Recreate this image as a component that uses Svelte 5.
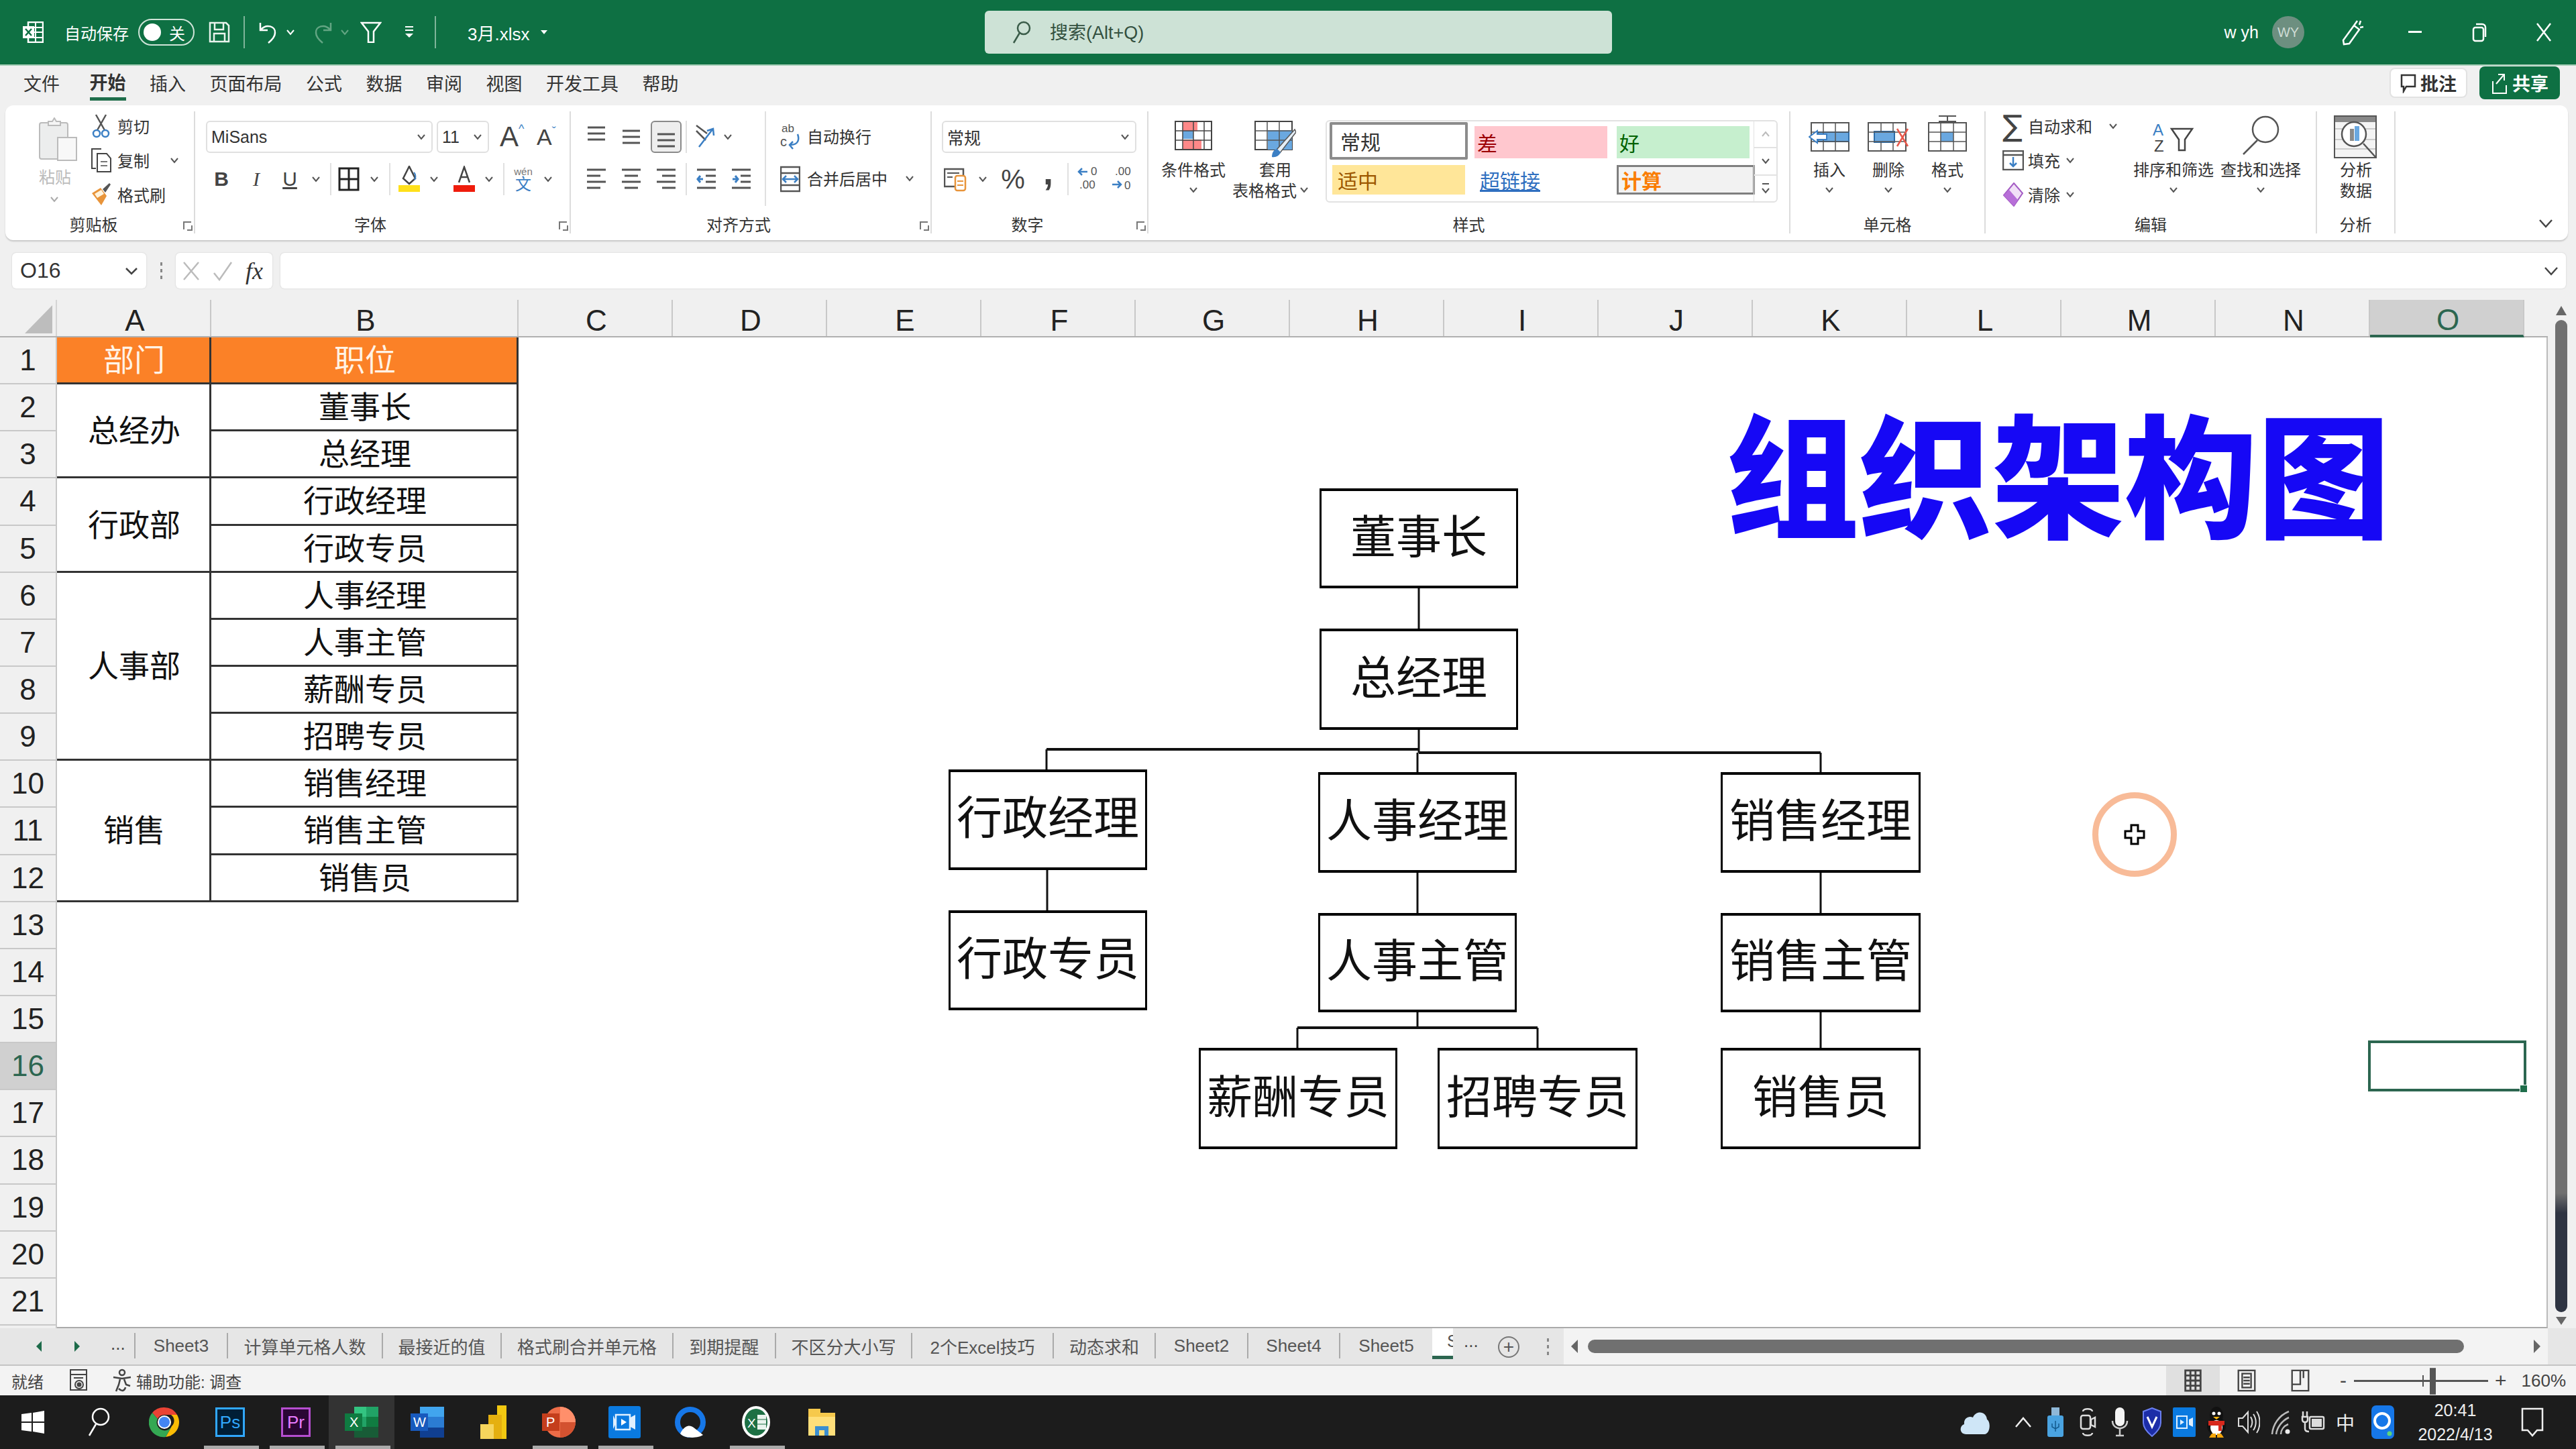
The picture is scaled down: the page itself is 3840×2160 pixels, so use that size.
<script>
  const tabs = ['插入', '页面布局', '公式', '数据', '审阅', '视图', '开发工具', '帮助'];

  const columns = 'CDEFGHIJKLMN'.split('');
  const rows = Array.from({ length: 21 }, (_, i) => i + 1);

  const departments = [
    { name: '总经办', jobs: ['董事长', '总经理'] },
    { name: '行政部', jobs: ['行政经理', '行政专员'] },
    { name: '人事部', jobs: ['人事经理', '人事主管', '薪酬专员', '招聘专员'] },
    { name: '销售', jobs: ['销售经理', '销售主管', '销售员'] },
  ];

  // canvas offset: the sheet cells start at 85,503 on the screen
  const ox = 85;
  const oy = 503;

  const nodes = [
    { text: '董事长', x: 1967, y: 728, w: 296, h: 149 },
    { text: '总经理', x: 1967, y: 937, w: 296, h: 151 },
    { text: '行政经理', x: 1414, y: 1147, w: 296, h: 150 },
    { text: '人事经理', x: 1965, y: 1151, w: 296, h: 150 },
    { text: '销售经理', x: 2565, y: 1151, w: 298, h: 150 },
    { text: '行政专员', x: 1414, y: 1357, w: 296, h: 149 },
    { text: '人事主管', x: 1965, y: 1361, w: 296, h: 148 },
    { text: '销售主管', x: 2565, y: 1361, w: 298, h: 148 },
    { text: '薪酬专员', x: 1787, y: 1562, w: 296, h: 151 },
    { text: '招聘专员', x: 2143, y: 1562, w: 298, h: 151 },
    { text: '销售员', x: 2565, y: 1562, w: 298, h: 151 },
  ];

  const links = [
    [2115, 877, 2115, 937],
    [2115, 1088, 2115, 1122],
    [1560, 1117, 2115, 1117],
    [2115, 1122, 2714, 1122],
    [1560, 1117, 1560, 1147],
    [2113, 1122, 2113, 1151],
    [2714, 1122, 2714, 1151],
    [1561, 1297, 1561, 1357],
    [2113, 1301, 2113, 1361],
    [2714, 1301, 2714, 1361],
    [2113, 1509, 2113, 1532],
    [1934, 1532, 2292, 1532],
    [1934, 1532, 1934, 1562],
    [2292, 1532, 2292, 1562],
    [2714, 1509, 2714, 1562],
  ];

  const sheets = [
    { name: 'Sheet3', w: 138 },
    { name: '计算单元格人数', w: 231 },
    { name: '最接近的值', w: 177 },
    { name: '格式刷合并单元格', w: 256 },
    { name: '到期提醒', w: 153 },
    { name: '不区分大小写', w: 203 },
    { name: '2个Excel技巧', w: 211 },
    { name: '动态求和', w: 152 },
    { name: 'Sheet2', w: 138 },
    { name: 'Sheet4', w: 137 },
    { name: 'Sheet5', w: 139 },
  ];
</script>

{#snippet chev(color = '#555')}
  <svg class="chev" width="14" height="10" viewBox="0 0 14 10"><path d="M2 2l5 6 5-6" fill="none" stroke={color} stroke-width="2" /></svg>
{/snippet}

{#snippet lines(kind)}
  <svg width="30" height="34" viewBox="0 0 30 34" fill="none" stroke="#555" stroke-width="3">
    {#if kind === 'top'}
      <path d="M2 3h26M2 12h26M2 21h26" />
    {:else if kind === 'mid'}
      <path d="M2 8h26M2 17h26M2 26h26" />
    {:else if kind === 'bot'}
      <path d="M2 13h26M2 22h26M2 31h26" />
    {:else if kind === 'left'}
      <path d="M1 3h28M1 12h20M1 21h28M1 30h20" />
    {:else if kind === 'center'}
      <path d="M1 3h28M5 12h20M1 21h28M5 30h20" />
    {:else if kind === 'right'}
      <path d="M1 3h28M9 12h20M1 21h28M9 30h20" />
    {:else if kind === 'out'}
      <path d="M1 3h28M14 12h15M14 21h15M1 30h28" /><path d="M10 17H2m4-5l-4 5 4 5" stroke="#3b7fc4" />
    {:else}
      <path d="M1 3h28M14 12h15M14 21h15M1 30h28" /><path d="M2 17h8m-4-5l4 5-4 5" stroke="#3b7fc4" />
    {/if}
  </svg>
{/snippet}

<div class="app">
  <header class="titlebar">
    <div class="tb-left">
      <svg class="tb-xl" width="32" height="32" viewBox="0 0 32 32"><rect x="9" y="1" width="22" height="30" fill="none" stroke="#fff" stroke-width="2.5" /><path d="M20 1v30M9 9h22M9 16h22M9 24h22" stroke="#fff" stroke-width="2" /><rect x="1" y="7" width="17" height="18" fill="#fff" /><path d="M5 11l9 10M14 11l-9 10" stroke="#0e7043" stroke-width="2.5" /></svg>
      <span class="autosave">自动保存</span>
      <span class="toggle"><i></i><b>关</b></span>
      <svg class="tb-save" width="32" height="32" viewBox="0 0 32 32" fill="none" stroke="#e8f3ec" stroke-width="2.5"><path d="M2 2h24l4 4v24H2zM9 2v10h13V2M8 30V18h16v12" /></svg>
      <i class="tb-sep first"></i>
      <svg class="tb-undo" width="30" height="34" viewBox="0 0 30 34" fill="none" stroke="#fff" stroke-width="2.5"><path d="M3 3v11h11M4 13C12 4 26 8 25 18c0 5-4 10-10 15" /></svg>
      <span class="tb-chev">{@render chev('#fff')}</span>
      <svg class="tb-redo" width="30" height="34" viewBox="0 0 30 34" fill="none" stroke="#63a583" stroke-width="2.5"><path d="M27 3v11H16M26 13C18 4 4 8 5 18c0 5 4 10 10 15" /></svg>
      <span class="tb-chev dim">{@render chev('#63a583')}</span>
      <svg class="tb-filter" width="32" height="32" viewBox="0 0 32 32" fill="none" stroke="#fff" stroke-width="2.5"><path d="M2 2h28L20 15v16h-8V15z" /></svg>
      <svg class="tb-more" width="14" height="20" viewBox="0 0 14 20"><path d="M1 2h12M1 7h12" stroke="#fff" stroke-width="2" /><path d="M1 12l6 6 6-6z" fill="#fff" /></svg>
      <i class="tb-sep second"></i>
      <span class="filename">3月.xlsx</span>
      <svg class="tb-drop" width="12" height="8" viewBox="0 0 12 8"><path d="M1 1h10L6 7z" fill="#fff" /></svg>
    </div>
    <div class="search">
      <svg width="30" height="36" viewBox="0 0 30 36" fill="none" stroke="#3a5c49" stroke-width="2.5"><circle cx="18" cy="12" r="9" /><path d="M12 19L3 34" /></svg>
      <span>搜索(Alt+Q)</span>
    </div>
    <div class="tb-right">
      <span class="user">w yh</span>
      <span class="avatar">WY</span>
      <svg class="pen" width="36" height="40" viewBox="0 0 36 40" fill="none" stroke="#fff" stroke-width="2.5"><path d="M4 32L20 10l8 6-15 21-8 1zM20 10l5-7M30 3l-2 6M34 12l-5 1" /></svg>
      <span class="winbtn"><svg width="20" height="4"><rect width="20" height="3" fill="#fff" /></svg></span>
      <span class="winbtn"><svg width="22" height="30" viewBox="0 0 22 30" fill="none" stroke="#fff" stroke-width="2.5"><rect x="2" y="8" width="15" height="20" rx="3" /><path d="M6 3h9c3 0 5 2 5 5v14" /></svg></span>
      <span class="winbtn"><svg width="24" height="30" viewBox="0 0 24 30" fill="none" stroke="#fff" stroke-width="2.5"><path d="M2 2l20 26M22 2L2 28" /></svg></span>
    </div>
  </header>

  <nav class="tabbar">
    <span class="tab">文件</span>
    <span class="tab active">开始</span>
    {#each tabs as tab}
      <span class="tab">{tab}</span>
    {/each}
    <div class="tab-actions">
      <span class="btn-note">
        <svg width="24" height="30" viewBox="0 0 24 30" fill="none" stroke="#333" stroke-width="2.5"><path d="M2 3h20v17H9l-4 7v-7H2z" /></svg>
        批注
      </span>
      <span class="btn-share">
        <svg width="26" height="34" viewBox="0 0 26 34" fill="none" stroke="#fff" stroke-width="2"><path d="M3 14v18h20V20M8 18L19 5M11 4h9v9" /></svg>
        共享
      </span>
    </div>
  </nav>

  <section class="ribbon">
    <div class="group clip">
      <div class="g-body">
        <div class="paste">
          <svg width="58" height="66" viewBox="0 0 58 66" fill="none"><rect x="1" y="8" width="42" height="54" rx="3" fill="#eceded" stroke="#bbb" stroke-width="2" /><path d="M14 12V6h6l3-5 3 5h6v6z" fill="#f5f5f5" stroke="#bbb" stroke-width="2" /><rect x="28" y="30" width="28" height="34" fill="#f8f8f8" stroke="#bbb" stroke-width="2" /></svg>
          <span>粘贴</span>
          {@render chev('#aaa')}
        </div>
        <div class="stack">
          <div class="st-row"><svg width="30" height="36" viewBox="0 0 30 36" fill="none" stroke-width="2.5"><path d="M7 1l13 23M22 1L9 24" stroke="#555" /><circle cx="8" cy="29" r="5" stroke="#3b7fc4" /><circle cx="21" cy="29" r="5" stroke="#3b7fc4" /></svg><span>剪切</span></div>
          <div class="st-row"><svg width="32" height="36" viewBox="0 0 32 36" fill="none" stroke="#444" stroke-width="2"><path d="M8 30H2V1h14" /><path d="M10 8h14l6 7v20H10z" /><path d="M15 20h10M15 26h10" stroke="#777" /></svg><span>复制</span><span class="copy-chev">{@render chev()}</span></div>
          <div class="st-row"><svg width="32" height="36" viewBox="0 0 32 36"><path d="M2 16l13-8 9 12-8 14z" fill="#e8943a" /><path d="M6 17l10-6 4 6-10 6z" fill="#fff3dc" /><path d="M18 10L28 1l2 2-8 12z" fill="#555" /></svg><span>格式刷</span></div>
        </div>
      </div>
      <div class="g-label">剪贴板</div>
      <span class="launcher"></span>
    </div>

    <div class="group font">
      <div class="g-body vert">
        <div class="row-1 font-r1">
          <span class="select fam"><span>MiSans</span>{@render chev()}</span>
          <span class="select size"><span>11</span>{@render chev()}</span>
          <span class="grow">A<sup>^</sup></span>
          <span class="shrink">A<sup>ˇ</sup></span>
        </div>
        <div class="row-2 font-r2">
          <span class="ib w52 bold">B</span>
          <span class="ib w52 ital">I</span>
          <span class="ib w48 under">U</span>
          <span class="ib w30">{@render chev()}</span>
          <span class="ib w14"><i class="vsep"></i></span>
          <span class="ib w40"><svg width="32" height="36" viewBox="0 0 32 36" fill="none" stroke="#222" stroke-width="3"><rect x="2" y="2" width="28" height="32" /><path d="M16 2v32M2 18h28" /></svg></span>
          <span class="ib w36">{@render chev()}</span>
          <span class="ib w10"><i class="vsep"></i></span>
          <span class="ib w48"><svg width="32" height="40" viewBox="0 0 32 40"><path d="M16 1l9 18-9 8-9-8z" fill="none" stroke="#444" stroke-width="2.5" /><path d="M23 10c3 3 3 8 1 11" fill="none" stroke="#3b7fc4" stroke-width="2" /><rect y="29" width="32" height="10" fill="#ffe01a" /></svg></span>
          <span class="ib w26">{@render chev()}</span>
          <span class="ib w64"><svg width="32" height="40" viewBox="0 0 32 40"><path d="M8 25L16 2l8 23M11 17h10" fill="none" stroke="#444" stroke-width="2.5" /><rect y="29" width="32" height="10" fill="#ef1c0c" /></svg></span>
          <span class="ib w10">{@render chev()}</span>
          <span class="ib w34"><i class="vsep"></i></span>
          <span class="ib w24 wen"><small>wén</small><em>文</em></span>
          <span class="ib w50">{@render chev()}</span>
        </div>
      </div>
      <div class="g-label">字体</div>
      <span class="launcher"></span>
    </div>

    <div class="group align">
      <div class="g-body">
        <div class="align-left">
          <div class="row-1">
            <span class="ib w52">{@render lines('top')}</span>
            <span class="ib w52">{@render lines('mid')}</span>
            <span class="ib w52 on"><span class="pressed">{@render lines('bot')}</span></span>
            <span class="ib w8"><i class="vsep"></i></span>
            <span class="ib w50"><svg width="36" height="42" viewBox="0 0 36 42" fill="none" stroke="#555" stroke-width="2.5"><path d="M4 4l16 12M4 12l14 14" /><path d="M8 36L28 10m-8 2l9-3 1 10" stroke="#3b7fc4" /></svg></span>
            <span class="ib w16">{@render chev()}</span>
          </div>
          <div class="row-2">
            <span class="ib w52">{@render lines('left')}</span>
            <span class="ib w52">{@render lines('center')}</span>
            <span class="ib w52">{@render lines('right')}</span>
            <span class="ib w8"><i class="vsep"></i></span>
            <span class="ib w52">{@render lines('out')}</span>
            <span class="ib w52">{@render lines('in')}</span>
          </div>
        </div>
        <div class="align-right">
          <div class="row-1 wrap-row">
            <svg width="30" height="44" viewBox="0 0 30 44" fill="none"><text x="2" y="15" font-size="17" fill="#555" font-family="Liberation Sans">ab</text><text x="0" y="36" font-size="20" fill="#555" font-family="Liberation Sans">c</text><path d="M26 18c3 8 1 16-11 16m4-5l-5 5 5 6" stroke="#3b7fc4" stroke-width="2.5" /></svg>
            <span>自动换行</span>
          </div>
          <div class="row-2 wrap-row">
            <svg width="30" height="40" viewBox="0 0 30 40" fill="none" stroke="#555" stroke-width="2.5"><rect x="1" y="2" width="28" height="36" /><path d="M1 11h28M1 29h28" /><path d="M4 20h22m-17-5l-5 5 5 5m12-10l5 5-5 5" stroke="#3b7fc4" /></svg>
            <span>合并后居中</span>
            <span class="merge-chev">{@render chev()}</span>
          </div>
        </div>
      </div>
      <div class="g-label">对齐方式</div>
      <span class="launcher"></span>
    </div>

    <div class="group number">
      <div class="g-body vert">
        <div class="row-1"><span class="select num"><span>常规</span>{@render chev()}</span></div>
        <div class="row-2 num-r2">
          <span class="ib w40"><svg width="34" height="38" viewBox="0 0 34 38" fill="none"><path d="M1 4h28v26H1z" stroke="#555" stroke-width="2.5" /><path d="M5 10h18M5 16h8" stroke="#555" stroke-width="2" /><rect x="17" y="14" width="15" height="22" rx="3" fill="#fff" stroke="#e8943a" stroke-width="2.5" /><path d="M20 22h9M20 28h9" stroke="#e8943a" stroke-width="2" /></svg></span>
          <span class="ib w42">{@render chev()}</span>
          <span class="ib w48 pct">%</span>
          <span class="ib w57 comma">,</span>
          <i class="vsep"></i>
          <span class="ib w59 dec"><svg width="34" height="40" viewBox="0 0 34 40" fill="none" stroke-width="2.5"><path d="M15 9H2m5-5l-5 5 5 5" stroke="#3b7fc4" /><text x="20" y="14" font-size="17" fill="#555" stroke="none" font-family="Liberation Sans">0</text><text x="3" y="34" font-size="17" fill="#555" stroke="none" font-family="Liberation Sans">.00</text></svg></span>
          <span class="ib w42 dec"><svg width="34" height="40" viewBox="0 0 34 40" fill="none" stroke-width="2.5"><text x="6" y="14" font-size="17" fill="#555" stroke="none" font-family="Liberation Sans">.00</text><path d="M2 28h13m-5-5l5 5-5 5" stroke="#3b7fc4" /><text x="20" y="35" font-size="17" fill="#555" stroke="none" font-family="Liberation Sans">0</text></svg></span>
        </div>
      </div>
      <div class="g-label">数字</div>
      <span class="launcher"></span>
    </div>

    <div class="group styles">
      <div class="g-body">
        <div class="big w110">
          <div class="big-icon">
            <svg width="56" height="44" viewBox="0 0 56 44"><rect x="1" y="1" width="54" height="42" fill="#fff" stroke="#444" stroke-width="2" /><rect x="12" y="2" width="22" height="13" fill="#f88" /><rect x="12" y="15" width="16" height="12" fill="#6aa8e0" /><rect x="12" y="28" width="28" height="14" fill="#f88" /><path d="M12 1v42M28 1v42M44 1v42M1 15h54M1 29h54" stroke="#444" stroke-width="1.5" /></svg>
          </div>
          <div class="big-text">条件格式</div>
          <div class="big-text">{@render chev()}</div>
        </div>
        <div class="big w134">
          <div class="big-icon">
            <svg width="62" height="56" viewBox="0 0 62 56"><rect x="1" y="1" width="55" height="42" fill="#fff" stroke="#444" stroke-width="2" /><rect x="20" y="14" width="36" height="29" fill="#6aa8e0" /><path d="M19 1v42M37 1v42M1 15h55M1 29h55" stroke="#555" stroke-width="1.5" /><path d="M60 13L34 42l-6 10 10-4 24-31z" fill="#e4eef7" stroke="#555" stroke-width="1.5" /><path d="M34 42c-5 1-8 5-8 12 6 1 11-2 13-7z" fill="#3b7fc4" /></svg>
          </div>
          <div class="big-text">套用</div>
          <div class="big-text shift">表格格式{@render chev()}</div>
        </div>
        <div class="gallery">
          <div class="gal-grid">
            <span class="st normal">常规</span>
            <span class="st bad">差</span>
            <span class="st good">好</span>
            <span class="st neutral">适中</span>
            <span class="st link">超链接</span>
            <span class="st calc">计算</span>
          </div>
          <div class="gal-arrows">
            <span><svg width="14" height="10" viewBox="0 0 14 10"><path d="M2 8l5-6 5 6" fill="none" stroke="#bbb" stroke-width="2" /></svg></span>
            <span>{@render chev()}</span>
            <span><svg width="14" height="18" viewBox="0 0 14 18"><path d="M2 2h10" stroke="#555" stroke-width="2" /><path d="M2 9l5 6 5-6" fill="none" stroke="#555" stroke-width="2" /></svg></span>
          </div>
        </div>
      </div>
      <div class="g-label">样式</div>
    </div>

    <div class="group cells">
      <div class="g-body">
        <div class="big w88">
          <div class="big-icon">
            <svg width="62" height="44" viewBox="0 0 62 44"><rect x="4" y="1" width="56" height="42" fill="#fff" stroke="#555" stroke-width="2" /><rect x="14" y="15" width="46" height="14" fill="#6aa8e0" stroke="#2d6ca8" stroke-width="2" /><path d="M22 1v42M40 1v42M4 15h56M4 29h56" stroke="#555" stroke-width="1.5" /><path d="M1 22l12-9v5h14v8H13v5z" fill="#fff" stroke="#3b7fc4" stroke-width="2" /></svg>
          </div>
          <div class="big-text">插入</div>
          <div class="big-text">{@render chev()}</div>
        </div>
        <div class="big w88">
          <div class="big-icon">
            <svg width="62" height="44" viewBox="0 0 62 44"><rect x="1" y="1" width="56" height="42" fill="#fff" stroke="#555" stroke-width="2" /><rect x="10" y="14" width="30" height="16" fill="#6aa8e0" stroke="#2d6ca8" stroke-width="2" /><path d="M20 1v13M38 1v13M20 30v13M38 30v13M1 15h56M1 29h56" stroke="#555" stroke-width="1.5" /><path d="M44 10l16 26M60 10L44 36" stroke="#e8584a" stroke-width="2.5" /></svg>
          </div>
          <div class="big-text">删除</div>
          <div class="big-text">{@render chev()}</div>
        </div>
        <div class="big w88">
          <div class="big-icon">
            <svg width="58" height="54" viewBox="0 0 58 54"><path d="M16 1h26M29 1v8M16 9h26" stroke="#555" stroke-width="2" /><rect x="1" y="11" width="56" height="42" fill="#fff" stroke="#555" stroke-width="2" /><rect x="19" y="25" width="19" height="14" fill="#6aa8e0" /><path d="M19 11v42M38 11v42M1 25h56M1 39h56" stroke="#555" stroke-width="1.5" /></svg>
          </div>
          <div class="big-text">格式</div>
          <div class="big-text">{@render chev()}</div>
        </div>
      </div>
      <div class="g-label">单元格</div>
    </div>

    <div class="group edit">
      <div class="g-body">
        <div class="stack w190">
          <div class="st-row"><span class="sigma">∑</span><span>自动求和</span><span class="sum-chev">{@render chev()}</span></div>
          <div class="st-row"><svg width="32" height="30" viewBox="0 0 32 30" fill="none" stroke="#555" stroke-width="2.5"><rect x="1" y="1" width="30" height="28" /><path d="M1 7h30" /><path d="M16 10v14m-5-5l5 5 5-5" stroke="#3b7fc4" /></svg><span>填充</span>{@render chev()}</div>
          <div class="st-row"><svg width="32" height="36" viewBox="0 0 32 36"><path d="M17 1l13 15-13 19L2 19z" fill="#f1e0f7" stroke="#a45cc4" stroke-width="2" /><path d="M2 19l8-8 13 15-6 9z" fill="#b76fd8" /></svg><span>清除</span>{@render chev()}</div>
        </div>
        <div class="big w130">
          <div class="big-icon">
            <svg class="sort-icon" width="62" height="56" viewBox="0 0 62 56" fill="none"><text x="0" y="26" font-size="24" fill="#3b7fc4" font-family="Liberation Sans">A</text><text x="2" y="50" font-size="24" fill="#444" font-family="Liberation Sans">Z</text><path d="M28 16h31L48 32v16h-9V32z" stroke="#444" stroke-width="2.5" /></svg>
          </div>
          <div class="big-text">排序和筛选</div>
          <div class="big-text">{@render chev()}</div>
        </div>
        <div class="big w130">
          <div class="big-icon">
            <svg width="58" height="60" viewBox="0 0 58 60" fill="none" stroke="#555" stroke-width="2.5"><circle cx="36" cy="21" r="19" /><path d="M24 37L3 58" /></svg>
          </div>
          <div class="big-text">查找和选择</div>
          <div class="big-text">{@render chev()}</div>
        </div>
      </div>
      <div class="g-label">编辑</div>
    </div>

    <div class="group analysis">
      <div class="g-body">
        <div class="big w116">
          <div class="big-icon">
            <svg width="66" height="64" viewBox="0 0 66 64" fill="none"><rect x="1" y="1" width="62" height="62" fill="#f4f4f4" stroke="#555" stroke-width="2" /><rect x="2" y="2" width="60" height="8" fill="#888" /><path d="M2 20h60M2 36h60M2 50h60" stroke="#ccc" stroke-width="2" /><circle cx="30" cy="28" r="18" fill="#fff" stroke="#555" stroke-width="2.5" /><rect x="24" y="20" width="6" height="18" fill="#8a8a8a" /><rect x="31" y="16" width="7" height="22" fill="#6aa8e0" /><path d="M44 42l18 20" stroke="#555" stroke-width="2.5" /></svg>
          </div>
          <div class="big-text">分析</div>
          <div class="big-text">数据</div>
        </div>
      </div>
      <div class="g-label">分析</div>
    </div>

    <span class="collapse"><svg width="22" height="14" viewBox="0 0 22 14"><path d="M2 2l9 10 9-10" fill="none" stroke="#444" stroke-width="2.5" /></svg></span>
  </section>

  <div class="formula">
    <div class="namebox"><span>O16</span><svg width="20" height="12" viewBox="0 0 20 12"><path d="M2 2l8 8 8-8" fill="none" stroke="#444" stroke-width="2.5" /></svg></div>
    <div class="dots"><i></i><i></i><i></i></div>
    <div class="fxbox">
      <svg width="26" height="30" viewBox="0 0 26 30"><path d="M2 2l22 26M24 2L2 28" stroke="#bbb" stroke-width="2.5" /></svg>
      <svg width="30" height="30" viewBox="0 0 30 30"><path d="M2 18l8 10L28 2" fill="none" stroke="#bbb" stroke-width="2.5" /></svg>
      <span class="fx">fx</span>
    </div>
    <div class="input"><svg width="22" height="14" viewBox="0 0 22 14"><path d="M2 2l9 10 9-10" fill="none" stroke="#444" stroke-width="2.5" /></svg></div>
  </div>

  <main class="sheet">
    <div class="sheet-main">
      <div class="colhead">
        <div class="corner"><svg width="42" height="42" viewBox="0 0 42 42"><path d="M41 0v42H0z" fill="#bdbdbd" /></svg></div>
        <div class="col w230">A</div>
        <div class="col w458">B</div>
        {#each columns as c}
          <div class="col w230">{c}</div>
        {/each}
        <div class="col w230 cur">O</div>
      </div>
      <div class="sheet-body">
        <div class="rowhead">
          {#each rows as r}
            <div class="rownum" class:cur={r === 16}>{r}</div>
          {/each}
        </div>
        <div class="canvas">
          <div class="table">
            <div class="cell head">部门</div>
            <div class="cell head">职位</div>
            {#each departments as d}
              <div class="cell dept" style="grid-row: span {d.jobs.length}">{d.name}</div>
              {#each d.jobs as job}
                <div class="cell job" style="grid-column: 2">{job}</div>
              {/each}
            {/each}
          </div>

          <svg class="links" width="3711" height="1477" viewBox="{ox} {oy} 3711 1477">
            {#each links as [x1, y1, x2, y2]}
              <line {x1} {y1} {x2} {y2} stroke="#111" stroke-width={y1 === y2 ? 4 : 3} />
            {/each}
          </svg>

          {#each nodes as n}
            <div class="node" style="left:{n.x - ox}px;top:{n.y - oy}px;width:{n.w}px;height:{n.h}px">{n.text}</div>
          {/each}

          <div class="wordart">组织架构图</div>
          <div class="selection"><i></i></div>
          <div class="pointer">
            <svg width="32" height="32" viewBox="0 0 32 32"><path d="M11 2h10v9h9v10h-9v9H11v-9H2V11h9z" fill="#fff" stroke="#000" stroke-width="3" /></svg>
          </div>
        </div>
      </div>
    </div>
    <div class="vscroll">
      <svg class="arrow-up" width="20" height="16" viewBox="0 0 20 16"><path d="M10 1l8 14H2z" fill="#666" /></svg>
      <div class="vthumb"></div>
      <svg width="20" height="14" viewBox="0 0 20 14"><path d="M10 13L2 1h16z" fill="#666" /></svg>
    </div>
  </main>

  <div class="sheetbar">
    <div class="nav">
      <svg width="10" height="16" viewBox="0 0 10 16"><path d="M9 0v16L1 8z" fill="#1d6b4a" /></svg>
      <svg width="10" height="16" viewBox="0 0 10 16"><path d="M1 0v16l8-8z" fill="#1d6b4a" /></svg>
      <span>...</span>
    </div>
    {#each sheets as s}
      <div class="sheet-tab" style="width:{s.w}px">{s.name}</div>
    {/each}
    <div class="sheet-cur">S</div>
    <span class="more">...</span>
    <span class="plus">+</span>
    <span class="bar-dots"><i></i><i></i><i></i></span>
    <div class="hscroll">
      <svg width="12" height="20" viewBox="0 0 12 20"><path d="M11 0v20L1 10z" fill="#666" /></svg>
      <div class="hthumb"></div>
      <svg width="12" height="20" viewBox="0 0 12 20"><path d="M1 0v20l10-10z" fill="#666" /></svg>
    </div>
  </div>

  <footer class="status">
    <span class="ready">就绪</span>
    <svg class="macro" width="30" height="36" viewBox="0 0 30 36" fill="none" stroke="#444" stroke-width="2"><rect x="3" y="2" width="24" height="30" /><path d="M3 9h24M8 14h14" /><circle cx="16" cy="24" r="6" /><circle cx="16" cy="24" r="2.5" fill="#444" /></svg>
    <svg class="person" width="32" height="36" viewBox="0 0 32 36" fill="none" stroke="#444" stroke-width="2.5"><circle cx="15" cy="6" r="4" /><path d="M2 13l13 2 13-2M12 16l-2 8-4 10M18 16l3 8 6 2M10 30c5 5 9 3 10-2" /></svg>
    <span class="access">辅助功能: 调查</span>
    <div class="status-right">
      <span class="view on"><svg width="28" height="36" viewBox="0 0 28 36" fill="none" stroke="#444" stroke-width="3"><rect x="2" y="2" width="24" height="32" /><path d="M10 2v32M18 2v32M2 10h24M2 18h24M2 26h24" /></svg></span>
      <span class="view"><svg width="30" height="36" viewBox="0 0 30 36" fill="none" stroke="#444" stroke-width="2.5"><rect x="2" y="2" width="26" height="32" /><rect x="8" y="7" width="14" height="22" /><path d="M10 13h10M10 18h10M10 23h10" /></svg></span>
      <span class="view"><svg width="30" height="36" viewBox="0 0 30 36" fill="none" stroke="#444" stroke-width="2.5"><path d="M2 2h26v32H2zM2 24h13V2M20 2v12" /></svg></span>
      <span class="zoom-minus">-</span>
      <span class="slider"><i class="tick"></i><i class="knob"></i></span>
      <span class="zoom-plus">+</span>
      <span class="zoom-val">160%</span>
    </div>
  </footer>

  <div class="taskbar">
    <span class="tk"><svg width="36" height="36" viewBox="0 0 36 36" fill="#fff"><path d="M1 6l15-2v13H1zM18 4l17-3v16H18zM1 19h15v13L1 30zM18 19h17v16l-17-3z" /></svg></span>
    <span class="tk"><svg width="34" height="44" viewBox="0 0 34 44" fill="none" stroke="#fff" stroke-width="2.5"><circle cx="20" cy="14" r="12" /><path d="M13 25L3 42" /></svg></span>
    <span class="tk"><svg width="46" height="46" viewBox="0 0 46 46"><path d="M23 1a22 22 0 0 1 19 11H23a11 11 0 0 0-10 6L5 9A22 22 0 0 1 23 1z" fill="#ea4335" /><path d="M42 12a22 22 0 0 1-17 33l9-16a11 11 0 0 0-1-17z" fill="#fbbc05" /><path d="M5 9a22 22 0 0 0 20 36l9-16a11 11 0 0 1-21-11z" fill="#34a853" /><circle cx="23" cy="23" r="10" fill="#fff" /><circle cx="23" cy="23" r="8" fill="#4285f4" /></svg></span>
    <span class="tk run"><span class="ps">Ps</span></span>
    <span class="tk run"><span class="pr">Pr</span></span>
    <span class="tk run act">
      <svg width="50" height="46" viewBox="0 0 50 46"><path d="M14 0h36v46H14z" fill="#21a366" /><path d="M14 0h18v15H14z" fill="#33c481" /><path d="M32 15h18v15H32z" fill="#107c41" /><path d="M14 30h36v16H14z" fill="#185c37" /><rect x="0" y="10" width="26" height="26" fill="#0f7b41" /><text x="7" y="30" font-size="20" fill="#fff" font-family="Liberation Sans">X</text></svg>
    </span>
    <span class="tk"><svg width="50" height="46" viewBox="0 0 50 46"><path d="M14 0h36v46H14z" fill="#41a5ee" /><path d="M14 15h36v16H14z" fill="#2b7cd3" /><path d="M14 31h36v15H14z" fill="#103f91" /><rect x="0" y="10" width="26" height="26" fill="#185abd" /><text x="4" y="30" font-size="20" fill="#fff" font-family="Liberation Sans">W</text></svg></span>
    <span class="tk"><svg width="40" height="50" viewBox="0 0 40 50"><path d="M26 0h14v50H26z" fill="#f2c811" /><path d="M13 14h20v36H13z" fill="#e5b00f" /><path d="M1 28h20v22H1z" fill="#f6d55c" /></svg></span>
    <span class="tk run"><svg width="50" height="46" viewBox="0 0 50 46"><circle cx="27" cy="23" r="23" fill="#ed6c47" /><path d="M27 0a23 23 0 0 1 23 23H27z" fill="#ff8f6b" /><path d="M27 23h23a23 23 0 0 1-23 23z" fill="#d35230" /><rect x="0" y="10" width="26" height="26" fill="#c43e1c" /><text x="6" y="30" font-size="20" fill="#fff" font-family="Liberation Sans">P</text></svg></span>
    <span class="tk run"><svg width="48" height="48" viewBox="0 0 48 48"><rect width="48" height="48" rx="3" fill="#0a7ae0" /><path d="M7 14l5 10-5 10zM31 18l9-5v22l-9-5z" fill="#dff0ff" /><rect x="11" y="13" width="21" height="22" fill="none" stroke="#dff0ff" stroke-width="2.5" /><path d="M19 19l8 5-8 5z" fill="#fff" /></svg></span>
    <span class="tk"><svg width="46" height="50" viewBox="0 0 46 50"><circle cx="23" cy="25" r="19" fill="none" stroke="#1677e8" stroke-width="8" /><path d="M8 42c6-12 14-14 20-9l14 11c-6 5-28 6-34-2z" fill="#fff" /></svg></span>
    <span class="tk run"><svg width="44" height="50" viewBox="0 0 44 50"><ellipse cx="22" cy="25" rx="21" ry="24" fill="#fff" /><ellipse cx="22" cy="25" rx="17" ry="20" fill="#1d7044" /><rect x="24" y="14" width="13" height="22" fill="#eaf4ee" /><path d="M24 21h13M24 28h13" stroke="#1d7044" /><text x="9" y="33" font-size="19" fill="#fff" font-family="Liberation Sans">X</text></svg></span>
    <span class="tk"><svg width="44" height="44" viewBox="0 0 44 44"><path d="M2 2h18v6h22v34H2z" fill="#f6c94c" /><path d="M2 14h40v28H2z" fill="#ffdf7a" /><path d="M12 28h20v14h-6v-8h-8v8h-6z" fill="#3b8ed0" /></svg></span>

    <div class="tray">
      <span class="t72"><svg width="46" height="40" viewBox="0 0 46 40"><path d="M10 38C0 38-1 26 7 23 6 14 14 10 20 13 24 2 40 3 41 16c6 3 5 22-4 22z" fill="#cfe6f7" /></svg></span>
      <span class="t48"><svg width="26" height="18" viewBox="0 0 26 18"><path d="M2 16L13 3l11 13" fill="none" stroke="#eee" stroke-width="2.5" /></svg></span>
      <span class="t48"><svg width="24" height="44" viewBox="0 0 24 44"><rect x="6" y="0" width="12" height="13" fill="#8fb8d8" /><rect y="12" width="24" height="32" rx="3" fill="#4aa3e0" /><path d="M12 20v16M7 24v5l5 3 5-3v-5" fill="none" stroke="#135b8e" stroke-width="1.5" /></svg></span>
      <span class="t48"><svg width="26" height="44" viewBox="0 0 26 44" fill="none" stroke="#ddd" stroke-width="2.5"><path d="M6 6c0-5 14-5 14 0M6 38c0 5 14 5 14 0" /><rect x="3" y="12" width="14" height="20" rx="3" /><path d="M18 18l6-3v14l-6-3z" /></svg></span>
      <span class="t48"><svg width="26" height="44" viewBox="0 0 26 44"><rect x="6" y="0" width="14" height="28" rx="7" fill="#f4f4f4" /><path d="M2 20c0 15 22 15 22 0M13 32v10M7 42h12" fill="none" stroke="#ccc" stroke-width="2.5" /></svg></span>
      <span class="t48"><svg width="30" height="44" viewBox="0 0 30 44"><path d="M15 1l13 5v17c0 8-7 15-13 20C9 38 2 31 2 23V6z" fill="#1c2da8" stroke="#6a7ff0" stroke-width="2" /><path d="M8 14l7 15 7-15" fill="none" stroke="#fff" stroke-width="3" /></svg></span>
      <span class="t48"><svg width="34" height="44" viewBox="0 0 34 44"><rect width="34" height="44" rx="2" fill="#0a7ae0" /><rect x="6" y="13" width="15" height="18" fill="none" stroke="#dff0ff" stroke-width="2" /><path d="M11 18l6 4-6 4zM24 18l6-3v14l-6-3z" fill="#dff0ff" /></svg></span>
      <span class="t48"><svg width="34" height="46" viewBox="0 0 34 46"><ellipse cx="17" cy="13" rx="10" ry="13" fill="#111" /><ellipse cx="17" cy="29" rx="14" ry="13" fill="#111" /><ellipse cx="17" cy="31" rx="9" ry="11" fill="#fff" /><circle cx="13" cy="10" r="2.5" fill="#fff" /><circle cx="21" cy="10" r="2.5" fill="#fff" /><path d="M12 15h10l-5 4z" fill="#f5b30c" /><path d="M5 21h24v6l-4 1v8h-5v-8H5z" fill="#d8281c" /><path d="M6 46l4-6h6v6zM28 46l-4-6h-6v6z" fill="#f5a60c" /></svg></span>
      <span class="t48"><svg width="34" height="40" viewBox="0 0 34 40" fill="none" stroke="#ddd" stroke-width="2"><path d="M2 14h6l8-9v30l-8-9H2z" /><path d="M20 12c3 5 3 11 0 16M24 8c5 7 5 17 0 24M29 4c6 9 6 23 0 32" /></svg></span>
      <span class="t48"><svg width="30" height="40" viewBox="0 0 30 40" fill="none" stroke="#bbb" stroke-width="2.5"><path d="M2 38C3 24 12 10 27 4M8 38c1-9 8-20 19-25M15 38c0-6 4-12 11-15" /><circle cx="25" cy="34" r="3.5" fill="#eee" stroke="none" /></svg></span>
      <span class="t48"><svg width="36" height="36" viewBox="0 0 36 36" fill="none" stroke="#ddd" stroke-width="2.5"><path d="M3 2v8M9 2v8M2 10h8v4c0 3-2 4-4 4s-4-1-4-4zM6 18v10c0 3 2 4 6 4" /><rect x="13" y="10" width="21" height="18" rx="2" /><rect x="16" y="13" width="15" height="12" fill="#ddd" stroke="none" /></svg></span>
      <span class="t48 zh">中</span>
      <span class="tq"><svg width="34" height="50" viewBox="0 0 34 50"><rect width="34" height="50" rx="7" fill="#1677e8" /><circle cx="16" cy="23" r="11" fill="none" stroke="#fff" stroke-width="4" /><circle cx="27" cy="42" r="3.5" fill="#5fd47a" /></svg></span>
      <span class="clock"><span>20:41</span><span>2022/4/13</span></span>
      <span class="notify"><svg width="34" height="44" viewBox="0 0 34 44" fill="none" stroke="#eee" stroke-width="2.5"><path d="M2 2h30v32H24l-7 8-7-8H2z" /></svg></span>
    </div>
  </div>
</div>

<style>
  :global(body) {
    margin: 0;
    background: #f0f0f0;
  }

  .app {
    width: 3840px;
    height: 2160px;
    display: flex;
    flex-direction: column;
    overflow: hidden;
    background: #f0f0f0;
    color: #333;
    font-family: "Liberation Sans", "Noto Sans CJK SC", sans-serif;
    font-size: 24px;
  }

  svg {
    display: block;
    flex-shrink: 0;
  }

  /* title bar */
  .titlebar {
    height: 96px;
    flex-shrink: 0;
    display: flex;
    align-items: center;
    background: #0e7043;
    border-bottom: 2px solid #a4cdb6;
    color: #fff;
  }
  .tb-left {
    width: 1468px;
    flex-shrink: 0;
    box-sizing: border-box;
    padding-left: 33px;
    display: flex;
    align-items: center;
  }
  .autosave { margin-left: 31px; width: 96px; white-space: nowrap; }
  .toggle {
    margin-left: 14px;
    width: 84px;
    height: 40px;
    box-sizing: border-box;
    border: 2px solid #cfe4d8;
    border-radius: 20px;
    display: flex;
    align-items: center;
    justify-content: space-between;
    padding: 0 12px 0 6px;
  }
  .toggle i { width: 26px; height: 26px; border-radius: 50%; background: #fff; }
  .toggle b { font-weight: 400; font-size: 24px; }
  .tb-save { margin-left: 21px; }
  .tb-sep { width: 2px; height: 48px; background: #7fb49a; }
  .tb-sep.first { margin-left: 20px; }
  .tb-undo { margin-left: 20px; }
  .tb-chev { margin-left: 11px; width: 14px; }
  .tb-redo { margin-left: 26px; }
  .tb-filter { margin-left: 16px; }
  .tb-more { margin-left: 34px; }
  .tb-sep.second { margin-left: 31px; }
  .filename { margin-left: 47px; font-size: 26px; }
  .tb-drop { margin-left: 16px; }

  .search {
    width: 935px;
    height: 64px;
    flex-shrink: 0;
    box-sizing: border-box;
    padding-left: 40px;
    display: flex;
    align-items: center;
    gap: 27px;
    background: #cde2d6;
    border-radius: 6px;
    color: #33503f;
    font-size: 27px;
  }
  .search span { padding-bottom: 3px; }

  .tb-right {
    margin-left: auto;
    display: flex;
    align-items: center;
  }
  .user { font-size: 25px; margin-right: 20px; }
  .avatar {
    width: 48px;
    height: 48px;
    border-radius: 50%;
    background: #6d8f80;
    color: #cfdcd5;
    font-size: 20px;
    display: flex;
    align-items: center;
    justify-content: center;
  }
  .pen { margin: 0 27px 0 54px; }
  .winbtn {
    width: 96px;
    display: flex;
    justify-content: center;
  }

  /* tabs */
  .tabbar {
    height: 59px;
    flex-shrink: 0;
    display: flex;
    align-items: stretch;
    padding-left: 35px;
    gap: 35.5px;
    font-size: 27px;
    color: #333;
  }
  .tab {
    height: 50px;
    display: flex;
    align-items: center;
    white-space: nowrap;
  }
  .tab.active {
    margin-left: 9px;
    font-weight: 700;
    box-sizing: border-box;
    height: 52px;
    border-bottom: 5px solid #1f6e4b;
  }
  .tab-actions {
    margin-left: auto;
    margin-right: 24px;
    padding-bottom: 8px;
    display: flex;
    align-items: center;
    gap: 18px;
  }
  .btn-note, .btn-share {
    display: flex;
    align-items: center;
    justify-content: center;
    gap: 6px;
    box-sizing: border-box;
    border-radius: 8px;
    font-weight: 700;
    font-size: 27px;
  }
  .btn-note {
    width: 116px;
    height: 45px;
    background: #fff;
    border: 2px solid #e2e2e2;
  }
  .btn-share {
    width: 120px;
    height: 49px;
    background: #0e7043;
    color: #fff;
  }

  /* ribbon */
  .ribbon {
    position: relative;
    height: 201px;
    flex-shrink: 0;
    margin: 0 12px 0 8px;
    display: flex;
    background: #fff;
    border-radius: 12px;
    box-shadow: 0 2px 2px #c8c8c8;
  }
  .group {
    position: relative;
    box-sizing: border-box;
    display: flex;
    flex-direction: column;
    border-right: 2px solid #dcdcdc;
    margin: 9px 0 10px;
  }
  .clip { width: 283px; padding-left: 50px; }
  .font { width: 560px; padding-left: 13px; }
  .align { width: 538px; padding-left: 12px; }
  .number { width: 323px; padding-left: 15px; }
  .styles { width: 957px; padding-left: 12px; }
  .cells { width: 291px; padding-left: 14px; }
  .edit { width: 494px; padding-left: 25px; }
  .analysis { width: 117px; }

  .g-body {
    height: 149px;
    flex-shrink: 0;
    display: flex;
  }
  .g-body.vert { flex-direction: column; }
  .g-label {
    flex: 1;
    margin-left: -12px;
    margin-top: 1px;
    display: flex;
    align-items: center;
    justify-content: center;
    font-size: 24px;
    color: #333;
  }
  .clip .g-label { margin-left: -50px; padding-right: 18px; }
  .font .g-label { margin-left: -13px; padding-right: 36px; }
  .align .g-label { padding-right: 36px; }
  .number .g-label { margin-left: -15px; padding-right: 36px; }
  .cells .g-label { margin-left: -14px; }
  .edit .g-label { margin-left: -25px; }
  .analysis .g-label { margin-left: 0; }

  .launcher {
    position: absolute;
    right: 4px;
    bottom: 6px;
    width: 12px;
    height: 12px;
    border-left: 2px solid #777;
    border-top: 2px solid #777;
    box-sizing: border-box;
  }
  .launcher::after {
    content: "";
    position: absolute;
    right: -2px;
    bottom: -2px;
    width: 6px;
    height: 6px;
    border-right: 2px solid #777;
    border-bottom: 2px solid #777;
  }

  .paste {
    width: 77px;
    padding-top: 9px;
    display: flex;
    flex-direction: column;
    align-items: flex-start;
    color: #bbb;
  }
  .paste span { margin-top: 4px; }
  .paste .chev { margin: 12px 0 0 16px; }
  .stack {
    margin-top: -4px;
    display: flex;
    flex-direction: column;
  }
  .st-row {
    height: 51px;
    display: flex;
    align-items: center;
    gap: 8px;
    white-space: nowrap;
  }
  .clip .st-row > svg { width: 32px; }
  .copy-chev { margin-left: 22px; }

  .row-1, .row-2 {
    height: 48px;
    display: flex;
    align-items: center;
    flex-shrink: 0;
  }
  .row-1 { margin-top: 14px; }
  .row-2 { margin-top: 15px; }

  .select {
    box-sizing: border-box;
    height: 48px;
    border: 2px solid #e0e0e0;
    border-radius: 6px;
    display: flex;
    align-items: center;
    justify-content: space-between;
    padding: 0 8px 0 6px;
    font-size: 25px;
    flex-shrink: 0;
  }
  .font-r1 { padding-left: 3px; }
  .fam { width: 338px; }
  .size { width: 78px; margin-left: 6px; }
  .grow, .shrink {
    display: flex;
    align-items: flex-start;
    color: #444;
    line-height: 1;
  }
  .grow { font-size: 42px; margin-left: 16px; width: 40px; }
  .shrink { font-size: 34px; margin-left: 15px; width: 40px; }
  .grow sup, .shrink sup { font-size: 18px; line-height: 1; color: #3b7fc4; }

  .ib {
    display: flex;
    align-items: center;
    justify-content: center;
    flex-shrink: 0;
    height: 100%;
  }
  .w8 { width: 8px; } .w10 { width: 10px; } .w14 { width: 14px; } .w16 { width: 16px; }
  .w24 { width: 24px; } .w26 { width: 26px; } .w30 { width: 30px; } .w34 { width: 34px; }
  .w36 { width: 36px; } .w40 { width: 40px; } .w42 { width: 42px; } .w48 { width: 48px; }
  .w50 { width: 50px; } .w52 { width: 52px; } .w57 { width: 57px; } .w59 { width: 59px; }
  .w64 { width: 64px; }
  .vsep {
    display: block;
    width: 2px;
    height: 48px;
    background: #e0e0e0;
    flex-shrink: 0;
  }
  .bold { font-weight: 700; font-size: 30px; color: #444; }
  .ital { font-style: italic; font-size: 30px; color: #444; font-family: "Liberation Serif", serif; }
  .under { text-decoration: underline; font-size: 30px; color: #444; }
  .wen { flex-direction: column; overflow: visible; color: #3b7fc4; line-height: 1; }
  .wen small { font-size: 15px; color: #777; white-space: nowrap; }
  .wen em { font-style: normal; font-size: 24px; }

  .align-left {
    width: 279px;
    box-sizing: border-box;
    border-right: 2px solid #e0e0e0;
    margin-bottom: 8px;
  }
  .pressed {
    box-sizing: border-box;
    width: 46px;
    height: 48px;
    background: #eee;
    border: 2px solid #8a8a8a;
    border-radius: 6px;
    display: flex;
    align-items: center;
    justify-content: center;
  }
  .align-right { padding-left: 21px; }
  .wrap-row { gap: 10px; white-space: nowrap; }
  .wrap-row span { padding-bottom: 3px; }
  .merge-chev { margin-left: 16px; }

  .num { width: 290px; }
  .pct { font-size: 40px; color: #444; }
  .comma { font-size: 54px; font-weight: 700; color: #444; padding-bottom: 22px; box-sizing: border-box; }

  .big {
    display: flex;
    flex-direction: column;
    align-items: center;
    flex-shrink: 0;
    white-space: nowrap;
  }
  .w88 { width: 88px; } .w110 { width: 110px; } .w116 { width: 116px; }
  .w130 { width: 130px; } .w134 { width: 134px; } .w190 { width: 190px; }
  .big-icon {
    height: 70px;
    display: flex;
    align-items: flex-end;
    flex-shrink: 0;
  }
  .big-text {
    height: 31px;
    display: flex;
    align-items: center;
    gap: 4px;
  }
  .big-text.shift { margin-left: -14px; }
  .styles .big-icon svg { margin-bottom: 12px; }
  .styles .big:nth-child(2) .big-icon svg { margin-bottom: 0; }
  .cells .big-icon svg { margin-bottom: 10px; }
  .edit .big-icon svg { margin-bottom: 4px; }

  .gallery {
    box-sizing: border-box;
    width: 674px;
    height: 123px;
    margin: 13px 0 0 8px;
    border: 2px solid #e2e2e2;
    border-radius: 6px;
    display: flex;
  }
  .gal-grid {
    width: 636px;
    flex-shrink: 0;
    display: grid;
    grid-template-columns: 212px 212px 212px;
    grid-template-rows: 60px 52px;
    padding: 1px 0 0 2px;
    box-sizing: border-box;
  }
  .st {
    box-sizing: border-box;
    display: flex;
    align-items: center;
    padding-left: 4px;
    font-size: 30px;
    margin: 6px 8px 6px 6px;
  }
  .normal { margin: 0 4px 4px 2px; border: 4px solid #8c8c8c; border-radius: 2px; padding-left: 12px; }
  .bad { background: #ffc7ce; color: #9c0006; }
  .good { background: #c6efce; color: #006100; }
  .neutral { background: #ffe699; color: #9c5700; margin: 4px 8px 4px 6px; padding-left: 8px; }
  .link { color: #2f6fc0; text-decoration: underline; padding-left: 8px; }
  .calc { background: #f2f2f2; color: #fa7d00; font-weight: 700; border: 3px solid #7f7f7f; margin: 4px 0 4px 6px; }
  .gal-arrows {
    flex: 1;
    display: flex;
    flex-direction: column;
    border-left: 1px solid #e2e2e2;
  }
  .gal-arrows span {
    flex: 1;
    display: flex;
    align-items: center;
    justify-content: center;
    border-bottom: 2px solid #e2e2e2;
  }
  .gal-arrows span:last-child { border-bottom: 0; }

  .sigma { width: 32px; font-size: 44px; line-height: 1; color: #444; font-family: "DejaVu Sans", sans-serif; }
  .sum-chev { margin-left: 18px; }
  .edit .st-row { gap: 6px; }
  .edit .st-row > svg:last-child { margin-left: 2px; }

  .collapse {
    position: absolute;
    right: 22px;
    bottom: 18px;
  }

  /* formula bar */
  .formula {
    height: 53px;
    margin-top: 19px;
    flex-shrink: 0;
    padding: 0 15px 0 18px;
    display: flex;
  }
  .namebox, .fxbox, .input {
    box-sizing: border-box;
    background: #fff;
    border-radius: 6px;
    box-shadow: 0 0 2px #c4c4c4;
    display: flex;
    align-items: center;
  }
  .namebox {
    width: 200px;
    padding: 0 12px;
    justify-content: space-between;
    font-size: 32px;
  }
  .dots {
    width: 44px;
    display: flex;
    flex-direction: column;
    align-items: center;
    justify-content: center;
    gap: 5px;
  }
  .dots i, .bar-dots i {
    width: 3px;
    height: 5px;
    background: #888;
    display: block;
  }
  .fxbox {
    width: 144px;
    padding: 0 10px;
    justify-content: space-between;
  }
  .fx {
    font-family: "Liberation Serif", serif;
    font-style: italic;
    font-size: 36px;
    color: #333;
    padding-right: 4px;
  }
  .input {
    flex: 1;
    margin-left: 12px;
    justify-content: flex-end;
    padding-right: 11px;
  }

  /* sheet */
  .sheet {
    height: 1533px;
    margin-top: 17px;
    flex-shrink: 0;
    display: flex;
  }
  .sheet-main {
    width: 3798px;
    flex-shrink: 0;
    display: flex;
    flex-direction: column;
  }
  .colhead {
    height: 56px;
    flex-shrink: 0;
    display: flex;
    box-sizing: border-box;
    border-bottom: 2px solid #b0b0b0;
    font-size: 44px;
    color: #222;
  }
  .corner {
    width: 85px;
    flex-shrink: 0;
    box-sizing: border-box;
    padding: 8px 0 0 37px;
    border-right: 2px solid #d4d4d4;
  }
  .col {
    box-sizing: border-box;
    flex-shrink: 0;
    display: flex;
    align-items: center;
    justify-content: center;
    border-right: 2px solid #c8c8c8;
    padding: 8px 0 0 4px;
  }
  .w230 { width: 230px; }
  .w458 { width: 458px; }
  .col.cur {
    background: #d0d0d0;
    color: #2c6650;
    border-bottom: 4px solid #2c6650;
    height: 56px;
  }
  .sheet-body {
    flex: 1;
    display: flex;
    min-height: 0;
  }
  .rowhead {
    width: 85px;
    flex-shrink: 0;
    box-sizing: border-box;
    border-right: 2px solid #c8c8c8;
    font-size: 44px;
    color: #222;
  }
  .rownum {
    box-sizing: border-box;
    height: 70.15px;
    display: flex;
    align-items: center;
    justify-content: center;
    border-bottom: 2px solid #c8c8c8;
  }
  .rownum.cur {
    background: #d0d0d0;
    color: #2c6650;
  }
  .canvas {
    position: relative;
    flex: 1;
    background: #fff;
    border-right: 2px solid #bbb;
    border-bottom: 2px solid #aaa;
    box-sizing: border-box;
    overflow: hidden;
  }
  .table {
    display: grid;
    grid-template-columns: 230px 458px;
    grid-auto-rows: 70.15px;
    width: 688px;
    font-size: 46px;
    line-height: 1;
    color: #111;
    font-family: "Noto Sans CJK SC", sans-serif;
  }
  .cell {
    box-sizing: border-box;
    display: flex;
    align-items: center;
    justify-content: center;
    border-right: 3px solid #333;
    border-bottom: 3px solid #333;
    padding: 0 0 7px 3px;
  }
  .head {
    background: #fb8127;
    color: #fff3e6;
  }

  .links {
    position: absolute;
    left: 0;
    top: 0;
  }
  .node {
    position: absolute;
    box-sizing: border-box;
    display: flex;
    align-items: center;
    justify-content: center;
    border: solid #000;
    border-width: 4px 3px;
    background: #fff;
    color: #111;
    font-family: "Noto Sans CJK SC", sans-serif;
    font-size: 68px;
    line-height: 1;
    padding-bottom: 14px;
    white-space: nowrap;
  }
  .wordart {
    position: absolute;
    left: 2488px;
    top: 98px;
    color: #1608f5;
    font-family: "Noto Sans CJK SC", sans-serif;
    font-weight: 900;
    font-size: 198px;
    line-height: 1;
    white-space: nowrap;
  }
  .selection {
    position: absolute;
    left: 3445px;
    top: 1048px;
    width: 236px;
    height: 76px;
    box-sizing: border-box;
    border: 4px solid #2c6650;
  }
  .selection i {
    position: absolute;
    right: -6px;
    bottom: -6px;
    width: 10px;
    height: 10px;
    background: #1f6e4b;
    border: 1px solid #fff;
  }
  .pointer {
    position: absolute;
    left: 3034px;
    top: 678px;
    width: 126px;
    height: 126px;
    box-sizing: border-box;
    border: 9px solid #f8bb98;
    border-radius: 50%;
    display: flex;
    align-items: center;
    justify-content: center;
  }

  .vscroll {
    flex: 1;
    display: flex;
    flex-direction: column;
    align-items: center;
    padding: 8px 2px 4px 0;
    gap: 6px;
  }
  .vthumb {
    flex: 1;
    width: 18px;
    border-radius: 9px;
    background: linear-gradient(#707070 88%, #2e3442 90%);
  }

  /* sheet tabs */
  .sheetbar {
    height: 56px;
    flex-shrink: 0;
    box-sizing: border-box;
    display: flex;
    background: #e6e6e6;
    border-bottom: 2px solid #c4c4c4;
    font-size: 26px;
    color: #555;
  }
  .nav {
    width: 200px;
    flex-shrink: 0;
    box-sizing: border-box;
    padding-left: 53px;
    display: flex;
    align-items: center;
    gap: 47px;
  }
  .nav span { margin-left: -2px; padding-bottom: 8px; color: #444; }
  .sheet-tab {
    box-sizing: border-box;
    flex-shrink: 0;
    margin: 7px 0 9px;
    border-left: 2px solid #aaa;
    display: flex;
    align-items: center;
    justify-content: center;
    white-space: nowrap;
  }
  .sheet-cur {
    width: 31px;
    flex-shrink: 0;
    margin-bottom: 8px;
    box-sizing: border-box;
    background: #fff;
    border-bottom: 5px solid #2c6650;
    overflow: hidden;
    display: flex;
    align-items: center;
    padding-left: 22px;
    margin-top: -2px;
  }
  .more { margin-left: 16px; width: 40px; padding-top: 4px; color: #444; }
  .plus {
    box-sizing: border-box;
    width: 32px;
    height: 32px;
    margin: 12px 0 0 11px;
    border: 2px solid #777;
    border-radius: 50%;
    display: flex;
    align-items: center;
    justify-content: center;
    line-height: 1;
    font-size: 28px;
  }
  .bar-dots {
    width: 22px;
    margin-left: 31px;
    display: flex;
    flex-direction: column;
    align-items: center;
    justify-content: center;
    gap: 5px;
  }
  .hscroll {
    margin-left: 13px;
    width: 1467px;
    flex-shrink: 0;
    box-sizing: border-box;
    background: #f3f3f3;
    padding: 0 10px;
    display: flex;
    align-items: center;
    gap: 14px;
  }
  .hthumb {
    width: 1306px;
    height: 20px;
    border-radius: 10px;
    background: #707070;
    margin-right: auto;
  }

  /* status bar */
  .status {
    height: 44px;
    flex-shrink: 0;
    display: flex;
    align-items: center;
    background: #f3f3f3;
    color: #444;
    padding-left: 17px;
  }
  .macro { margin-left: 37px; }
  .person { margin-left: 35px; }
  .access { margin-left: 4px; }
  .status-right {
    margin-left: auto;
    height: 100%;
    display: flex;
    align-items: center;
    padding-right: 15px;
  }
  .view {
    width: 80px;
    height: 100%;
    display: flex;
    align-items: center;
    justify-content: center;
  }
  .view svg { height: 34px; }
  .view.on { background: #e0e0e0; }
  .zoom-minus { margin-left: 19px; font-size: 30px; }
  .slider {
    position: relative;
    width: 200px;
    height: 3px;
    margin-left: 11px;
    background: #555;
  }
  .tick {
    position: absolute;
    left: 102px;
    top: -7px;
    width: 2px;
    height: 17px;
    background: #555;
  }
  .knob {
    position: absolute;
    left: 113px;
    top: -20px;
    width: 9px;
    height: 44px;
    background: #555;
    transform: scaleY(0.9);
  }
  .zoom-plus { margin-left: 10px; font-size: 30px; }
  .zoom-val { margin-left: 22px; font-size: 26px; }

  /* taskbar */
  .taskbar {
    height: 80px;
    flex-shrink: 0;
    display: flex;
    background: #1c1c1c;
    color: #eee;
  }
  .tk {
    position: relative;
    width: 98px;
    height: 100%;
    flex-shrink: 0;
    display: flex;
    align-items: center;
    justify-content: center;
  }
  .tk.run::after {
    content: "";
    position: absolute;
    left: 10px;
    right: 6px;
    bottom: 0;
    height: 5px;
    background: #aaa;
  }
  .tk.act { background: #333; }
  .ps, .pr {
    box-sizing: border-box;
    width: 44px;
    height: 44px;
    display: flex;
    align-items: center;
    justify-content: center;
    font-size: 26px;
  }
  .ps { background: #001e36; color: #31a8ff; border: 3px solid #31a8ff; }
  .pr { background: #2a0634; color: #e77bff; border: 3px solid #b64ed0; }

  .tray {
    margin-left: auto;
    padding-right: 34px;
    display: flex;
    align-items: center;
  }
  .t72 { width: 72px; margin-right: 12px; display: flex; justify-content: center; }
  .t48 { width: 48px; display: flex; justify-content: center; }
  .zh { font-size: 28px; }
  .tq { width: 48px; margin-left: 8px; display: flex; justify-content: center; }
  .clock {
    width: 168px;
    display: flex;
    flex-direction: column;
    align-items: center;
    gap: 10px;
    font-size: 25px;
    line-height: 1.05;
  }
  .notify { width: 62px; display: flex; justify-content: center; }
</style>
